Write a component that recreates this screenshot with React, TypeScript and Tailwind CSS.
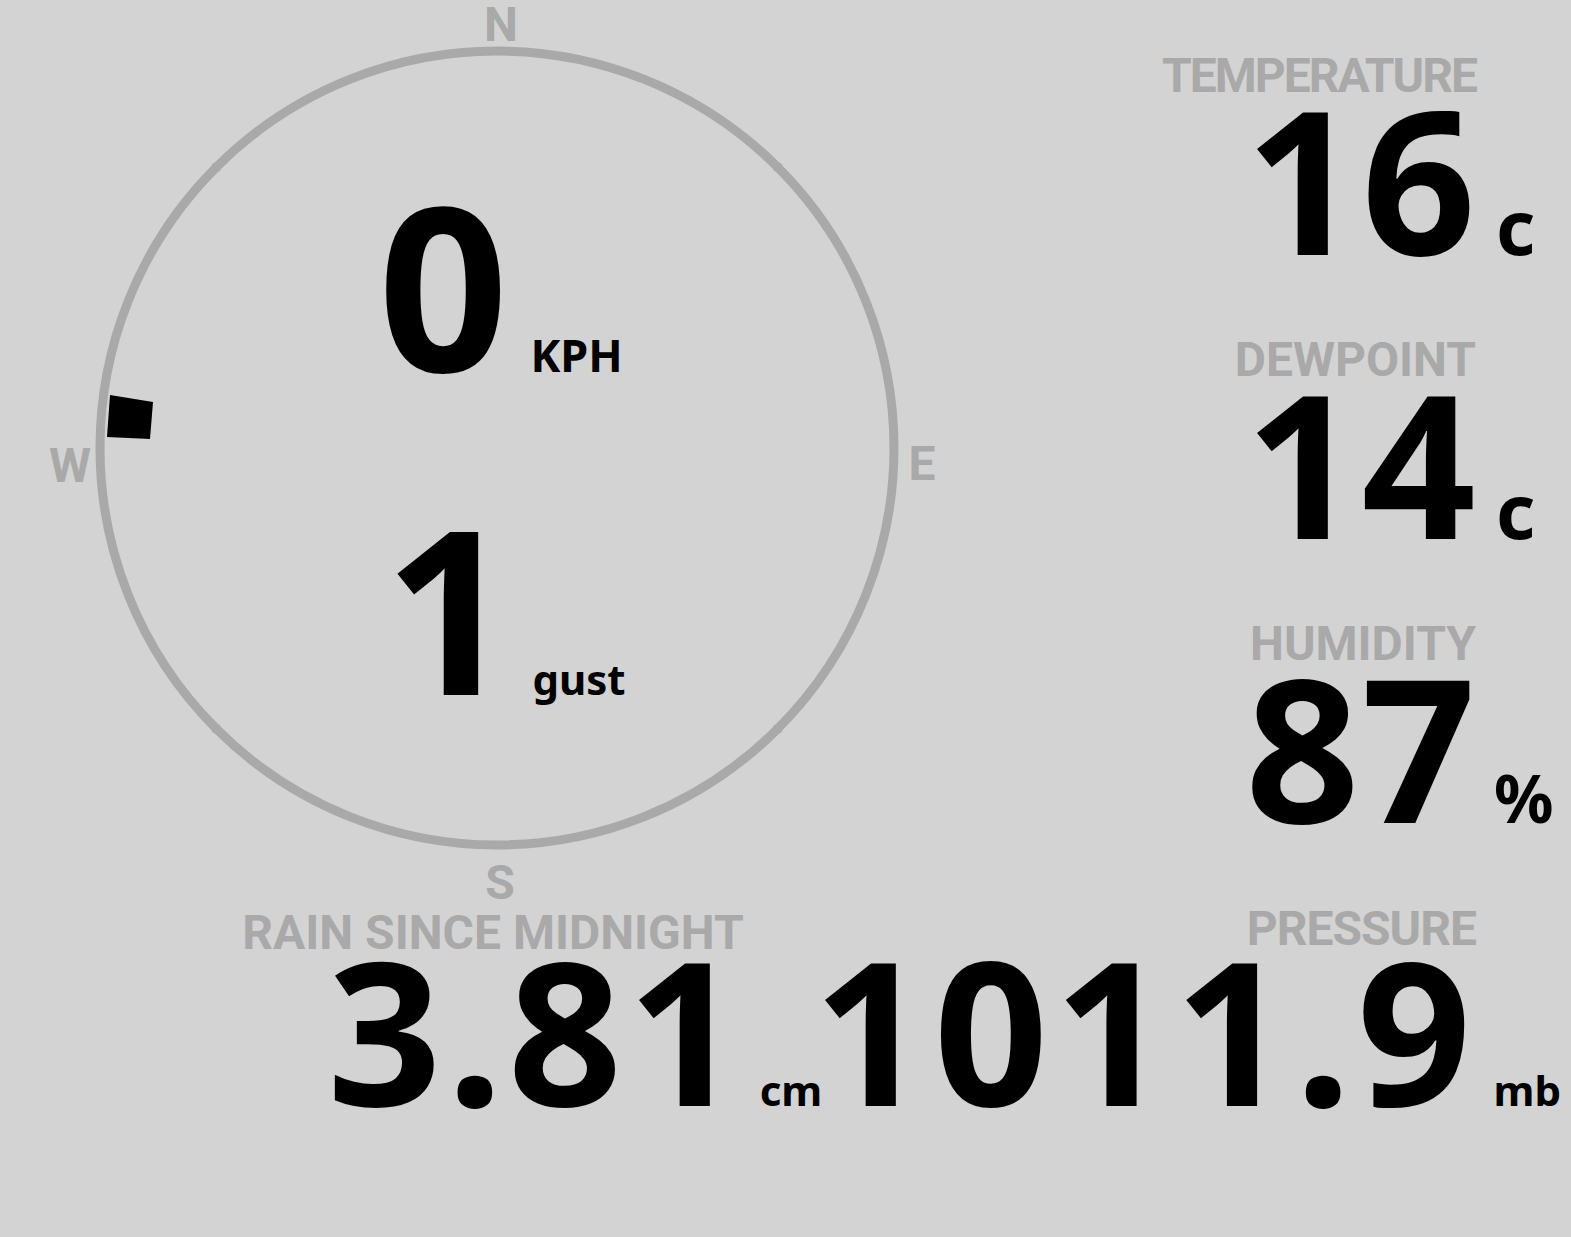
import React from "react";

const LABEL =
  "text-[48px] leading-[52px] -mb-[4px] font-bold text-[#a9a9a9] whitespace-nowrap font-['Roboto','Noto_Sans',sans-serif]";
const NUM = "text-[200px] font-bold text-black";

function Compass() {
  const cx = 497;
  const cy = 448;
  const r = 397;
  const ticks = [45, 135, 225, 315].map((a) => {
    const rad = (a * Math.PI) / 180;
    return {
      x1: cx + Math.sin(rad) * (r - 5),
      y1: cy - Math.cos(rad) * (r - 5),
      x2: cx + Math.sin(rad) * (r + 5),
      y2: cy - Math.cos(rad) * (r + 5),
    };
  });

  return (
    <div className="relative w-[1000px] h-[903px] shrink-0">
      <svg className="absolute inset-0 overflow-visible" width="1000" height="903">
        <circle cx={cx} cy={cy} r={r} fill="none" stroke="#a9a9a9" strokeWidth="9" />
        {ticks.map((t, i) => (
          <line key={i} {...t} stroke="#a9a9a9" strokeWidth="3" />
        ))}
        {/* wind direction */}
        <polygon points="110,395 153,402 150,439 107,437" fill="#000" />
        <g
          fill="#a9a9a9"
          fontSize="48"
          fontWeight="700"
          fontFamily="'Roboto', 'Noto Sans', sans-serif"
          textAnchor="middle"
        >
          <text x="501" y="41">N</text>
          <text x="70" y="482">W</text>
          <text x="922" y="480">E</text>
          <text x="500" y="899">S</text>
        </g>
      </svg>

      <div className="relative flex flex-col pt-[194px] gap-[140px]">
        <div className="flex items-baseline pl-[378px]">
          <span className="text-[228px] leading-[180px] font-bold tracking-[6px]">0</span>
          <span className="text-[45px] leading-none font-bold ml-[16px]">KPH</span>
        </div>
        <div className="flex items-baseline pl-[384px]">
          <span className="text-[228px] leading-[180px] font-bold">1</span>
          <span className="text-[42px] leading-none font-bold ml-[18px]">gust</span>
        </div>
      </div>
    </div>
  );
}

function Stat({
  label,
  value,
  unit,
  unitClass,
  labelClass = "",
}: {
  label: string;
  value: string;
  unit: string;
  unitClass: string;
  labelClass?: string;
}) {
  return (
    <div className="flex flex-col items-end">
      <div className={LABEL + " mr-[85px] " + labelClass}>{label}</div>
      <div className="flex items-baseline">
        <span className={NUM + " leading-[160px] tracking-[2px]"}>{value}</span>
        <span className={"w-[83px] font-bold leading-none " + unitClass}>{unit}</span>
      </div>
    </div>
  );
}

export default function App() {
  return (
    <div className="min-h-screen w-full bg-[#d3d3d3] text-black font-['Noto_Sans',sans-serif] overflow-hidden">
      <div className="flex">
        <Compass />
        <div className="flex-1 flex flex-col items-end pt-[50px] pr-[10px] gap-[70px]">
          <Stat
            label="TEMPERATURE"
            value="16"
            unit="c"
            unitClass="text-[76px] pl-[18px]"
            labelClass="tracking-[-2px]"
          />
          <Stat label="DEWPOINT" value="14" unit="c" unitClass="text-[76px] pl-[18px]" />
          <Stat label="HUMIDITY" value="87" unit="%" unitClass="text-[66px] pl-[16px]" />
        </div>
      </div>

      <div className="flex flex-col">
        <div className="flex items-start h-[48px]">
          <div className={LABEL + " w-[986px] text-center mt-[4px]"}>RAIN SINCE MIDNIGHT</div>
          <div className={LABEL + " ml-auto mr-[95px] tracking-[-1px]"}>PRESSURE</div>
        </div>
        <div className="flex items-baseline justify-end pr-[10px]">
          <span className={NUM + " leading-[155px] tracking-[5px]"}>3.81</span>
          <span className="text-[42px] leading-none font-bold ml-[13px] mr-[-9px]">cm</span>
          <span className={NUM + " leading-[155px] tracking-[6px]"}>1011.9</span>
          <span className="text-[42px] leading-none font-bold ml-[16px]">mb</span>
        </div>
      </div>
    </div>
  );
}
